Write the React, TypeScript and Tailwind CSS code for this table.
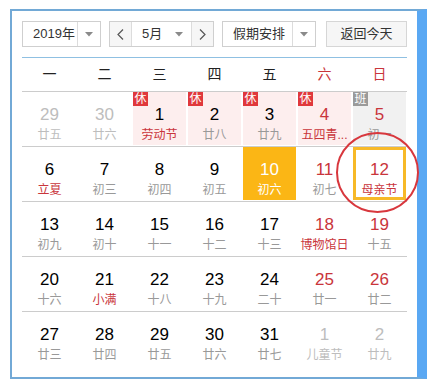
import React from "react";

type Cell = {
  d: string;
  l: string;
  dim?: boolean;
  red?: boolean;
  fest?: boolean;
  bg?: "pink" | "gray" | "today" | "sel";
  badge?: "休" | "班";
};

const rows: Cell[][] = [
  [
    { d: "29", l: "廿五", dim: true },
    { d: "30", l: "廿六", dim: true },
    { d: "1", l: "劳动节", fest: true, bg: "pink", badge: "休" },
    { d: "2", l: "廿八", bg: "pink", badge: "休" },
    { d: "3", l: "廿九", bg: "pink", badge: "休" },
    { d: "4", l: "五四青...", red: true, fest: true, bg: "pink", badge: "休" },
    { d: "5", l: "初一", red: true, bg: "gray", badge: "班" },
  ],
  [
    { d: "6", l: "立夏", fest: true },
    { d: "7", l: "初三" },
    { d: "8", l: "初四" },
    { d: "9", l: "初五" },
    { d: "10", l: "初六", bg: "today" },
    { d: "11", l: "初七", red: true },
    { d: "12", l: "母亲节", red: true, fest: true, bg: "sel" },
  ],
  [
    { d: "13", l: "初九" },
    { d: "14", l: "初十" },
    { d: "15", l: "十一" },
    { d: "16", l: "十二" },
    { d: "17", l: "十三" },
    { d: "18", l: "博物馆日", red: true, fest: true },
    { d: "19", l: "十五", red: true },
  ],
  [
    { d: "20", l: "十六" },
    { d: "21", l: "小满", fest: true },
    { d: "22", l: "十八" },
    { d: "23", l: "十九" },
    { d: "24", l: "二十" },
    { d: "25", l: "廿一", red: true },
    { d: "26", l: "廿二", red: true },
  ],
  [
    { d: "27", l: "廿三" },
    { d: "28", l: "廿四" },
    { d: "29", l: "廿五" },
    { d: "30", l: "廿六" },
    { d: "31", l: "廿七" },
    { d: "1", l: "儿童节", dim: true },
    { d: "2", l: "廿九", dim: true },
  ],
];

const weekdays = ["一", "二", "三", "四", "五", "六", "日"];

function Arrow() {
  return (
    <svg width="8" height="5" viewBox="0 0 8 5">
      <path d="M0 0 L8 0 L4 4.5 Z" fill="#8a8a8a" />
    </svg>
  );
}

function DayCell({ c }: { c: Cell }) {
  let box = "bg-transparent";
  if (c.bg === "pink") box = "bg-[#fdeeee]";
  if (c.bg === "gray") box = "bg-[#f1f1f1]";
  if (c.bg === "today") box = "bg-[#fbb615]";
  if (c.bg === "sel") box = "border-[3px] border-[#f7b928]";

  let numColor = "text-[#000]";
  let lunColor = "text-[#999]";
  if (c.red) numColor = "text-[#c9353b]";
  if (c.fest) lunColor = "text-[#c9353b]";
  if (c.dim) {
    numColor = "text-[#bdbdbd]";
    lunColor = "text-[#bdbdbd]";
  }
  if (c.bg === "today") {
    numColor = "text-white";
    lunColor = "text-white";
  }

  return (
    <div className="h-[54px] px-[1px] pb-[1px]">
      <div
        className={`relative h-full flex flex-col items-center ${box} ${
          c.bg === "sel" ? "pt-[10px]" : "pt-[13px]"
        }`}
      >
        {c.badge && (
          <div
            className={`absolute left-0 top-0 w-[15px] h-[14px] flex items-center justify-center text-[12px] leading-none text-white ${
              c.badge === "休" ? "bg-[#e0383c]" : "bg-[#9a9a9a]"
            }`}
          >
            {c.badge}
          </div>
        )}
        <div className={`text-[17px] leading-[20px] ${numColor}`}>{c.d}</div>
        <div className={`text-[12px] leading-[16px] mt-[2px] whitespace-nowrap ${lunColor}`}>{c.l}</div>
      </div>
    </div>
  );
}

export default function App() {
  return (
    <div
      className="relative w-[427px] h-[385px] bg-white overflow-hidden"
      style={{ fontFamily: '"Liberation Sans", Arial, "Noto Sans CJK SC", sans-serif' }}
    >
      <div className="ml-[10px] mt-[9px] w-[417px] h-[370px] border-l-2 border-t-2 border-b-2 border-[#72a9d6] border-r-[10px] border-r-[#5aa8f3] bg-white pl-[10px] pt-[10px]">
        {/* header */}
        <div className="w-[385px] h-[37px] border-b border-[#8fc0e2] flex items-start text-[13px] text-[#333]">
          <div className="w-[79px] h-[26px] border border-[#cfcfcf] flex bg-white">
            <div className="flex-1 flex items-center pl-[10px]">2019年</div>
            <div className="w-[23px] border-l border-[#dcdcdc] flex items-center justify-center">
              <Arrow />
            </div>
          </div>
          <div className="ml-[8px] w-[105px] h-[26px] border border-[#cfcfcf] flex">
            <div className="w-[22px] bg-[#f6f6f6] flex items-center justify-center border-r border-[#dcdcdc] text-[#555]">
              <svg width="7" height="11" viewBox="0 0 7 11">
                <path d="M6 0.5 L1 5.5 L6 10.5" fill="none" stroke="#555" strokeWidth="1.2" />
              </svg>
            </div>
            <div className="flex-1 flex items-center pl-[10px] pr-[8px] justify-between bg-white">
              <span>5月</span>
              <Arrow />
            </div>
            <div className="w-[22px] bg-[#f6f6f6] flex items-center justify-center border-l border-[#dcdcdc]">
              <svg width="7" height="11" viewBox="0 0 7 11">
                <path d="M1 0.5 L6 5.5 L1 10.5" fill="none" stroke="#555" strokeWidth="1.2" />
              </svg>
            </div>
          </div>
          <div className="ml-[8px] w-[94px] h-[26px] border border-[#cfcfcf] flex bg-white">
            <div className="flex-1 flex items-center pl-[10px]">假期安排</div>
            <div className="w-[23px] border-l border-[#dcdcdc] flex items-center justify-center">
              <Arrow />
            </div>
          </div>
          <div className="ml-[10px] w-[81px] h-[26px] border border-[#d6d6d6] bg-[#f6f6f6] flex items-center justify-center">
            返回今天
          </div>
        </div>

        {/* weekdays */}
        <div className="w-[385px] h-[33px] grid grid-cols-7 items-center text-[14px]">
          {weekdays.map((w, i) => (
            <div key={w} className={`text-center ${i >= 5 ? "text-[#c9353b]" : "text-[#222]"}`}>
              {w}
            </div>
          ))}
        </div>

        {/* weeks */}
        <div className="w-[385px]">
          {rows.map((r, ri) => (
            <div key={ri} className="grid grid-cols-7 border-t border-[#cccccc]">
              {r.map((c, ci) => (
                <DayCell key={ci} c={c} />
              ))}
            </div>
          ))}
        </div>
      </div>

      {/* annotation circle */}
      <svg className="absolute left-0 top-0 pointer-events-none" width="427" height="385">
        <ellipse cx="377.5" cy="172.5" rx="40.5" ry="39.5" fill="none" stroke="#d8373d" strokeWidth="2" />
      </svg>
    </div>
  );
}
